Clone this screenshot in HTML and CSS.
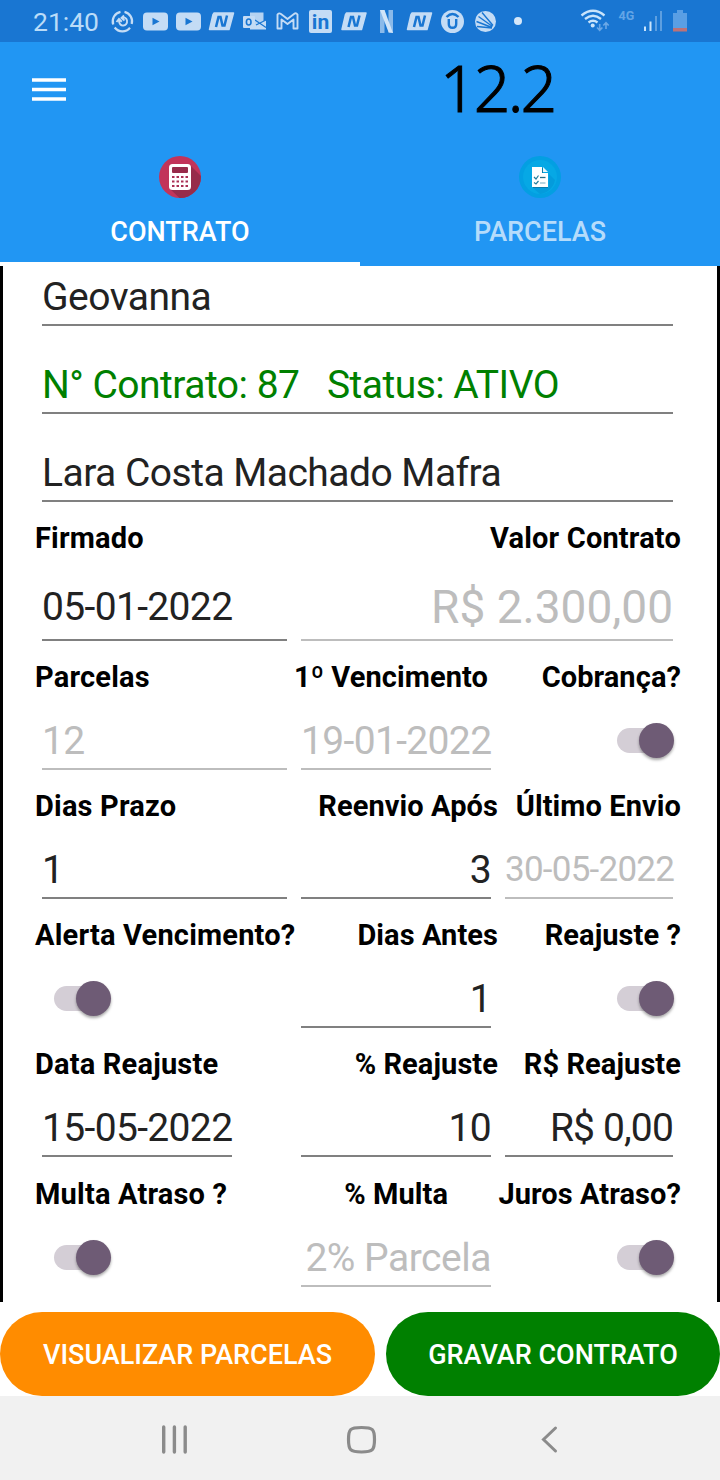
FILE: index.html
```html
<!DOCTYPE html>
<html lang="pt-BR">
<head>
<meta charset="utf-8">
<title>Contrato</title>
<link rel="stylesheet" href="styles.css">
</head>
<body>
<div class="status">
  <span class="clock">21:40</span>
  <svg class="notifications" width="420" height="42" viewBox="110 0 420 42">
    <defs>
      <g id="badge"><path d="M5 0.500H24.500L20 17H0.500L4 2Q4.500 0.500 6 0.500Z" fill="#c4dcf5" stroke="#c4dcf5" stroke-width="1.500" stroke-linejoin="round"/><path d="M7 14.500L9.500 4.500H11.500L13.500 13H15.500L18 3" fill="none" stroke="#1976d2" stroke-width="2.500"/></g>
      <g id="video"><rect width="25" height="18" rx="4" fill="#c4dcf5"/><path d="M9.500 5.200L16.500 9L9.500 12.800Z" fill="#1976d2"/></g>
    </defs>
    <g fill="none" stroke="#c4dcf5" stroke-width="2.200">
      <path d="M120.500 11.900A9.700 9.700 0 0 0 113.200 24.500M114.700 27.500A9.700 9.700 0 0 0 130 27.700M131.700 24A9.700 9.700 0 0 0 124.500 11.900"/>
      <path d="M119 20.500C119 28 128 26.500 127 20.500C126.500 17.500 124 17 122.500 18.500M116.500 22L119 19L121.800 21.700M124 15.500L121.500 18L124.500 20.500" stroke-width="1.900"/>
    </g>
    <use href="#video" x="143" y="12.500"/>
    <use href="#video" x="176" y="12.500"/>
    <use href="#badge" x="209" y="12.500"/>
    <g>
      <path d="M250 12.500H263.500V27.500H250Z" fill="#b5d3f2"/>
      <path d="M256 24L266 20V29.500H250V27Z" fill="#c4dcf5"/>
      <path d="M255 20L266 27.500M256 25L266 20" stroke="#1976d2" stroke-width="1.200"/>
      <rect x="243" y="16" width="12" height="12" rx="1" fill="#c4dcf5"/>
      <ellipse cx="248.700" cy="22" rx="2.300" ry="3" fill="none" stroke="#1976d2" stroke-width="1.600"/>
    </g>
    <path d="M277.500 28.500V14.500Q279 12.500 281 14L287.500 19L294 14Q296 12.500 297.500 14.500V28.500H293.500V19.500L287.500 24L281.500 19.500V28.500Z" fill="none" stroke="#c4dcf5" stroke-width="1.900" stroke-linejoin="round"/>
    <rect x="309" y="10" width="23" height="23" rx="2" fill="#c4dcf5"/>
    <text x="320.500" y="29" text-anchor="middle" class="linked">in</text>
    <use href="#badge" x="341.500" y="12.500"/>
    <g><rect x="380" y="10" width="4.500" height="23" fill="#8abaea"/><rect x="388.500" y="10" width="4.500" height="23" fill="#8abaea"/><path d="M380 10H384.500L393 33L388.500 32Z" fill="#d0e4f8"/></g>
    <use href="#badge" x="407" y="12.500"/>
    <circle cx="452.500" cy="21.500" r="11.500" fill="#c4dcf5"/>
    <path d="M446.500 17Q452.500 11 458.500 17M448.800 19V24C448.800 29 456.200 29 456.200 24V19" fill="none" stroke="#1976d2" stroke-width="2.400"/>
    <circle cx="485.500" cy="21.500" r="10.500" fill="#c4dcf5"/>
    <path d="M482 12.500L493 25.500M478.500 16.500L492.500 26.500M476.500 21.500L492 27.500M477 26.500L492 28" stroke="#1976d2" stroke-width="1.400"/>
    <circle cx="518" cy="21" r="4" fill="#d5e7f9"/>
  </svg>
  <svg class="signals" width="110" height="42" viewBox="580 0 110 42">
    <g fill="none" stroke="#c9e4fb" stroke-width="2.300"><path d="M581.500 15.500Q593 6 604.500 15.500M585 19Q593 12.500 601 19M588.500 22.500Q593 19 597.500 22.500"/></g>
    <circle cx="592.700" cy="25.500" r="2" fill="#c9e4fb"/>
    <path d="M599.700 24V30M597 27.500L599.700 30.300L602.400 27.500M606 29V22.500M603.300 25.500L606 22.700L608.700 25.500" fill="none" stroke="#6ba8e6" stroke-width="1.600"/>
    <text x="618.500" y="20" class="network">4G</text>
    <path d="M644 26.500h2V31h-2ZM649.500 21.500h2V31h-2Z" fill="#c9e4fb"/>
    <path d="M655 16h2V31h-2ZM660 11h2V31h-2Z" fill="#5d9fe0"/>
    <path d="M677 10h6v3h4v16h-14v-16h4Z" fill="#5a9fe4"/><rect x="673" y="28" width="14" height="3.500" fill="#bd7277"/>
  </svg>
</div>
<header class="appbar">
  <svg class="menu" width="34" height="24"><path d="M0 2H34M0 11.500H34M0 21H34" stroke="#fff" stroke-width="3.400"/></svg>
  <span class="version">12.2</span>
</header>
<nav class="tabs">
  <div class="tab active">
    <svg width="42" height="42">
      <clipPath id="disc"><circle cx="21" cy="21" r="21"/></clipPath>
      <circle cx="21" cy="21" r="21" fill="#c2345a"/>
      <path d="M31 9L50 28V50H29L11 33Z" fill="#972c4b" clip-path="url(#disc)"/>
      <rect x="10" y="8" width="22" height="26" rx="3.500" fill="#fff"/>
      <rect x="13" y="11" width="16" height="6" rx="1" fill="#972c4b"/>
      <path d="M13 21H29.500M13 25.500H29.500M13 30H29.500" stroke="#a93055" stroke-width="1.900" stroke-dasharray="2.500 2"/>
    </svg>
    <span>CONTRATO</span>
  </div>
  <div class="tab">
    <svg width="42" height="42">
      <circle cx="21" cy="21" r="21" fill="#039fe2"/><circle cx="21" cy="21" r="17" fill="#06a8e5"/>
      <path d="M14 32H30V18L36 24A17 17 0 0 1 21 38Z" fill="#049bdc"/>
      <path d="M14 12H24V17H29V32H14Z" fill="#0b7cab"/>
      <path d="M13 11H23V17H29V31H13Z" fill="#fff"/><path d="M24 11L29 16H24Z" fill="#e5f6fd"/>
      <path d="M15 21L17 23L19.500 19.500M15 26.500L17 28L19.500 25" fill="none" stroke="#247d9c" stroke-width="1.200"/>
      <path d="M21 21.500H26.500" stroke="#246c88" stroke-width="1.300"/><path d="M21 27H26.500" stroke="#91bfd0" stroke-width="1.300"/>
    </svg>
    <span>PARCELAS</span>
  </div>
</nav>
<main class="form">
  <div class="field single">Geovanna</div>
  <div class="field single contract">N° Contrato: 87 &nbsp; Status: ATIVO</div>
  <div class="field single">Lara Costa Machado Mafra</div>

  <div class="labels"><b>Firmado</b><b class="wide">Valor Contrato</b></div>
  <div class="fields tall"><div class="field">05-01-2022</div><div class="field wide disabled amount">R$ 2.300,00</div></div>

  <div class="labels"><b>Parcelas</b><b class="due">1º Vencimento</b><b>Cobrança?</b></div>
  <div class="fields"><div class="field disabled">12</div><div class="field disabled">19-01-2022</div><i class="switch"></i></div>

  <div class="labels"><b>Dias Prazo</b><b>Reenvio Após</b><b>Último Envio</b></div>
  <div class="fields"><div class="field">1</div><div class="field">3</div><div class="field disabled small">30-05-2022</div></div>

  <div class="labels"><b>Alerta Vencimento?</b><b>Dias Antes</b><b>Reajuste ?</b></div>
  <div class="fields"><i class="switch"></i><div class="field">1</div><i class="switch"></i></div>

  <div class="labels"><b>Data Reajuste</b><b>% Reajuste</b><b>R$ Reajuste</b></div>
  <div class="fields"><div class="field short">15-05-2022</div><div class="field">10</div><div class="field money">R$ 0,00</div></div>

  <div class="labels last"><b>Multa Atraso ?</b><b class="fine">% Multa</b><b>Juros Atraso?</b></div>
  <div class="fields"><i class="switch"></i><div class="field disabled percent">2% Parcela</div><i class="switch"></i></div>
</main>
<div class="actions">
  <button class="view">VISUALIZAR PARCELAS</button>
  <button class="save">GRAVAR CONTRATO</button>
</div>
<footer class="sysnav">
  <svg width="720" height="84" fill="none" stroke="#8b8b8b">
    <path d="M163.700 31V56M174.400 31V56M185.200 31V56" stroke-width="3.400" stroke-linecap="round"/>
    <path d="M361.500 31.500C373 31.500 374.500 33 374.500 43.500S373 56 361.500 56S348.500 54 348.500 43.500S350 31.500 361.500 31.500Z" stroke-width="3.200"/>
    <path d="M555.500 32L543.500 43.500L555.500 55" stroke-width="3" stroke-linecap="round"/>
  </svg>
</footer>
</body>
</html>
```
FILE: styles.css
```css
* { box-sizing: border-box; }
body { margin: 0; width: 720px; height: 1480px; background: #fff; color: #000; font-family: Roboto, sans-serif; overflow: hidden; }
svg { display: block; flex: none; }

.status { display: flex; height: 42px; background: #1976d2; padding-left: 33px; }
.clock { width: 77px; font-size: 26.5px; line-height: 44px; color: #badcf8; white-space: nowrap; }
.signals { margin-left: 50px; }
.linked { font-family: Roboto, sans-serif; font-size: 21px; font-weight: 700; fill: #1976d2; }
.network { font-size: 12.5px; font-weight: 700; fill: #63a5e6; }

.appbar { display: flex; height: 98px; background: #2196f3; padding-left: 32px; }
.menu { margin-top: 36px; }
.version { margin-left: 374px; font-family: "Noto Sans", sans-serif; font-size: 64px; font-weight: 300; line-height: 92px; letter-spacing: -2.7px; -webkit-text-stroke: 1px #000; }

.tabs { display: flex; height: 126px; background: #2196f3; }
.tab { display: flex; flex-direction: column; align-items: center; width: 360px; padding-top: 16px; border-bottom: 4px solid #2196f3; font-size: 27px; font-weight: 500; color: #b5dcfb; }
.tab span { margin-top: 17px; line-height: 34px; }
.active { border-bottom-color: #fff; color: #fff; }

.form { height: 1036px; padding: 0 32px; border: solid #000; border-width: 0 3px; }
.field { height: 57px; line-height: 57px; border-bottom: 2px solid #808080; font-size: 39px; letter-spacing: -.65px; color: #222; white-space: nowrap; }
.single { height: 60px; margin: 0 12px 28px 7px; padding-top: 3px; letter-spacing: -.52px; }
.single:nth-child(3) { margin-bottom: 0; }
.contract { color: #008000; }
.labels { display: grid; grid-template-columns: 266px 197px 183px; height: 72px; line-height: 72px; font-size: 29px; letter-spacing: .08px; white-space: nowrap; }
.labels b { display: flex; justify-content: flex-end; font-weight: 700; }
.labels b:first-child { justify-content: flex-start; letter-spacing: .19px; }
.labels .wide { grid-column: span 2; letter-spacing: .17px; }
.labels .due { margin-right: 10px; }
.labels .fine { margin-right: 50px; }
.last { height: 73px; line-height: 74px; }
.fields { display: grid; grid-template-columns: 245px 190px 168px; column-gap: 14px; padding-left: 7px; text-align: right; }
.fields .field:first-child { text-align: left; }
.fields .wide { grid-column: span 2; }
.fields .short { width: 190px; }
.disabled { color: #bdbdbd; border-color: #bdbdbd; }
.tall .field { height: 67px; line-height: 67px; }
.fields .amount { font-size: 46px; letter-spacing: 0; }
.fields .small { font-size: 35px; line-height: 56px; letter-spacing: -.75px; }
.fields .money { letter-spacing: -.85px; }
.fields .percent { letter-spacing: -.48px; }
.switch { position: relative; justify-self: end; width: 57px; height: 35px; margin: 10px -1px 0 0; }
.switch:first-child { justify-self: start; margin-left: 12px; }
.switch::before { content: ""; position: absolute; left: 0; top: 5px; width: 50px; height: 25px; border-radius: 13px; background: #d4ced6; }
.switch::after { content: ""; position: absolute; right: 0; top: 0; width: 35px; height: 35px; border-radius: 50%; background: #6e5b75; box-shadow: 0 2px 3px rgba(0, 0, 0, .35); }

.actions { display: flex; gap: 11px; height: 94px; padding-top: 10px; }
.actions button { height: 84px; padding: 2px 0 0; border: 0; border-radius: 42px; font: 500 27px/82px Roboto, sans-serif; color: #fff; white-space: nowrap; }
.view { width: 375px; background: #ff8c00; }
.save { width: 334px; background: #008000; }
.sysnav { height: 84px; background: #f1f1f1; }
```
